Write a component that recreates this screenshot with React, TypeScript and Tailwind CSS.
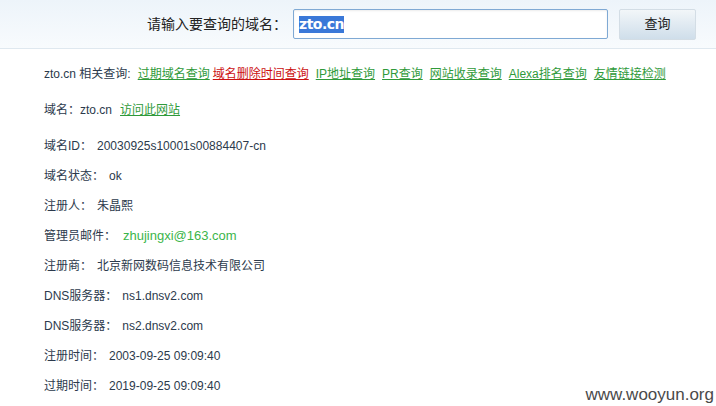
const font = "font-['Liberation_Sans','Noto_Sans_CJK_SC',sans-serif]";

const links = [
  { text: "过期域名查询", red: false },
  { text: "域名删除时间查询", red: true },
  { text: "IP地址查询", red: false },
  { text: "PR查询", red: false },
  { text: "网站收录查询", red: false },
  { text: "Alexa排名查询", red: false },
  { text: "友情链接检测", red: false },
];

const rows = [
  { label: "域名ID：", value: "20030925s10001s00884407-cn" },
  { label: "域名状态：", value: "ok" },
  { label: "注册人：", value: "朱晶熙" },
  { label: "管理员邮件：", value: "zhujingxi@163.com", email: true },
  { label: "注册商：", value: "北京新网数码信息技术有限公司" },
  { label: "DNS服务器：", value: "ns1.dnsv2.com" },
  { label: "DNS服务器：", value: "ns2.dnsv2.com" },
  { label: "注册时间：", value: "2003-09-25 09:09:40" },
  { label: "过期时间：", value: "2019-09-25 09:09:40" },
];

export default function App() {
  return (
    <div className={`relative w-[716px] h-[406px] overflow-hidden bg-white ${font} text-[#2c3a4c]`}>
      <div className="h-[49px] border-b border-[#dfe8ef] bg-gradient-to-b from-[#edf4fa] to-[#f8fbfd] flex items-center pl-[147px]">
        <span className="text-[14px] text-[#222]">请输入要查询的域名：</span>
        <div className="ml-[6px] w-[315px] h-[30px] border border-[#7fa9d4] rounded-[2px] bg-white flex items-center px-[5px] shadow-[inset_0_1px_2px_rgba(0,0,0,0.08)]">
          <span className="bg-[#3a78d8] text-white font-bold text-[14px] leading-[17px] font-['DejaVu_Sans',sans-serif] tracking-[-0.5px]">
            zto.cn
          </span>
        </div>
        <button className="ml-[11px] w-[77px] h-[31px] border border-[#d3dde5] rounded-[2px] bg-gradient-to-b from-[#f2f6f9] to-[#cfdeea] text-[13px] text-[#222]">
          查询
        </button>
      </div>

      <div className="pl-[44px] text-[12px]">
        <div className="h-[30px] mt-[10px] flex items-center">
          <span>zto.cn 相关查询:</span>
          {links.map((l, i) => (
            <a
              key={i}
              className={`underline ${i === 0 ? "ml-[7px]" : i === 1 ? "ml-[3px]" : "ml-[7px]"} ${
                l.red ? "text-[#cc1111]" : "text-[#2f9a3a]"
              }`}
            >
              {l.text}
            </a>
          ))}
        </div>

        <div className="h-[30px] mt-[6px] flex items-center">
          <span>域名：zto.cn</span>
          <a className="ml-[8px] underline text-[#2f9a3a]">访问此网站</a>
        </div>

        <div className="mt-[6px] flex flex-col">
          {rows.map((r, i) => (
            <div key={i} className="h-[30px] flex items-center">
              <span>{r.label}</span>
              {r.email ? (
                <span className="ml-[7px] text-[13px] text-[#3cb54a] font-['Liberation_Sans',sans-serif]">{r.value}</span>
              ) : (
                <span className="ml-[5px]">{r.value}</span>
              )}
            </div>
          ))}
        </div>
      </div>

      <div className="absolute right-[2px] bottom-[1px] text-[17px] leading-[20px] text-[#4a4a4a] font-['Liberation_Sans',sans-serif]">
        www.wooyun.org
      </div>
    </div>
  );
}
